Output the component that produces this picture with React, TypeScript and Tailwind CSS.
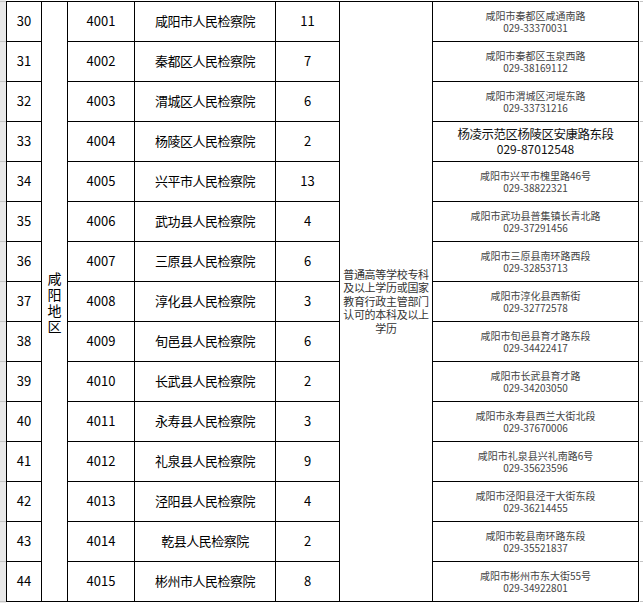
import React from "react";

const rows = [
  ["30", "4001", "咸阳市人民检察院", "11", "咸阳市秦都区咸通南路", "029-33370031"],
  ["31", "4002", "秦都区人民检察院", "7", "咸阳市秦都区玉泉西路", "029-38169112"],
  ["32", "4003", "渭城区人民检察院", "6", "咸阳市渭城区河堤东路", "029-33731216"],
  ["33", "4004", "杨陵区人民检察院", "2", "杨凌示范区杨陵区安康路东段", "029-87012548"],
  ["34", "4005", "兴平市人民检察院", "13", "咸阳市兴平市槐里路46号", "029-38822321"],
  ["35", "4006", "武功县人民检察院", "4", "咸阳市武功县普集镇长青北路", "029-37291456"],
  ["36", "4007", "三原县人民检察院", "6", "咸阳市三原县南环路西段", "029-32853713"],
  ["37", "4008", "淳化县人民检察院", "3", "咸阳市淳化县西新街", "029-32772578"],
  ["38", "4009", "旬邑县人民检察院", "6", "咸阳市旬邑县育才路东段", "029-34422417"],
  ["39", "4010", "长武县人民检察院", "2", "咸阳市长武县育才路", "029-34203050"],
  ["40", "4011", "永寿县人民检察院", "3", "咸阳市永寿县西兰大街北段", "029-37670006"],
  ["41", "4012", "礼泉县人民检察院", "9", "咸阳市礼泉县兴礼南路6号", "029-35623596"],
  ["42", "4013", "泾阳县人民检察院", "4", "咸阳市泾阳县泾干大街东段", "029-36214455"],
  ["43", "4014", "乾县人民检察院", "2", "咸阳市乾县南环路东段", "029-35521837"],
  ["44", "4015", "彬州市人民检察院", "8", "咸阳市彬州市东大街55号", "029-34922801"],
];

function Ticks({ bg }: { bg: string }) {
  return (
    <div className={`flex flex-col pt-px h-[603px] ${bg}`}>
      {rows.map((r) => (
        <div key={r[0]} className="h-[40px] shrink-0 border-t border-[#c4c4c4]" />
      ))}
      <div className="h-px shrink-0 bg-[#c4c4c4]" />
    </div>
  );
}

export default function App() {
  const cell = "bg-white flex items-center justify-center";
  return (
    <div className="flex w-[643px] h-[603px] bg-white font-['Noto_Sans_CJK_SC',sans-serif] text-black overflow-hidden">
      <div className="w-[6px] shrink-0">
        <Ticks bg="bg-[#e8e8e8]" />
      </div>
      <div className="mt-px self-start grid bg-black gap-px p-px grid-cols-[34px_25px_66px_140px_63px_92px_205px] grid-rows-[repeat(15,39px)]">
        {rows.map((r, i) => (
          <React.Fragment key={r[0]}>
            <div className={`${cell} text-[13px] pb-[1px]`}>{r[0]}</div>
            {i === 0 && (
              <div className={`${cell} row-span-15 flex-col text-[14px] leading-[16px]`}>
                <span className="block h-[16px]">咸</span>
                <span className="block h-[16px]">阳</span>
                <span className="block h-[16px]">地</span>
                <span className="block h-[16px]">区</span>
              </div>
            )}
            <div className={`${cell} text-[13px] pb-[1px]`}>{r[1]}</div>
            <div className={`${cell} text-[13px] tracking-[-0.5px] pb-[1px]`}>{r[2]}</div>
            <div className={`${cell} text-[13px] pb-[1px]`}>{r[3]}</div>
            {i === 0 && (
              <div className={`${cell} row-span-15 px-[2px]`}>
                <p className="text-[11px] leading-[13.5px] text-center text-[#333] tracking-[-0.3px]">
                  普通高等学校专科及以上学历或国家教育行政主管部门认可的本科及以上学历
                </p>
              </div>
            )}
            {r[0] === "33" ? (
              <div className={`${cell} flex-col`}>
                <div className="text-[12.5px] leading-[14.5px] text-[#111] tracking-[-0.5px]">{r[4]}</div>
                <div className="text-[12px] leading-[14.5px] text-[#111]">{r[5]}</div>
              </div>
            ) : (
              <div className={`${cell} flex-col pt-px`}>
                <div className="text-[10px] leading-[12.5px] text-[#444]">{r[4]}</div>
                <div className="text-[10px] leading-[12.5px] text-[#444]">{r[5]}</div>
              </div>
            )}
          </React.Fragment>
        ))}
      </div>
      <div className="w-[4px] shrink-0 ml-px">
        <Ticks bg="bg-white" />
      </div>
    </div>
  );
}
